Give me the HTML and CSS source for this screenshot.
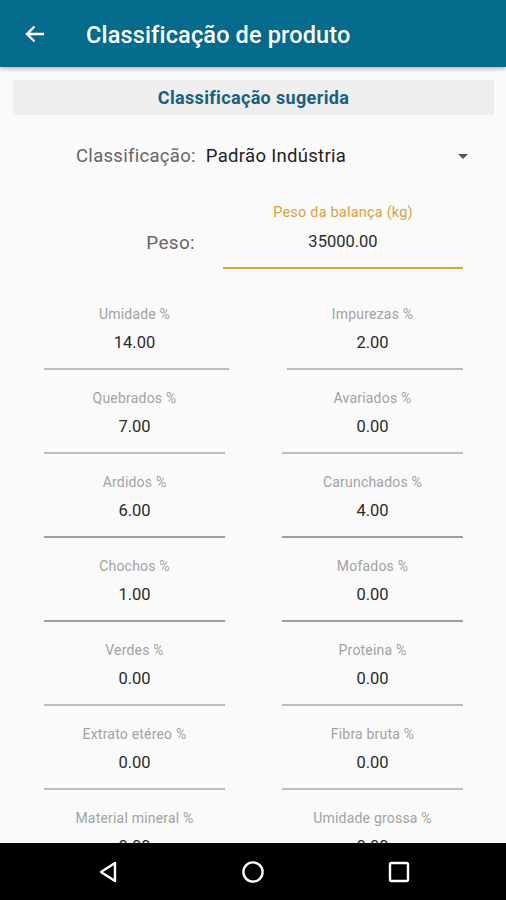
FILE: index.html
```html
<!DOCTYPE html>
<html lang="pt-BR">
<head>
  <meta charset="UTF-8">
  <title>Classificação de produto</title>
  <meta name="viewport" content="width=device-width,initial-scale=1">
  <link rel="stylesheet" href="styles.css">
</head>
<body>
  <div class="app">
    <header class="toolbar">
      <svg class="toolbar-back" width="20" height="18" viewBox="0 0 20 18">
        <path d="M19 9H2.5M9.5 1.5L2 9l7.5 7.5" fill="none" stroke="#fff" stroke-width="2.4"/>
      </svg>
      <h1 class="toolbar-title">Classificação de produto</h1>
    </header>

    <main class="content">
      <div class="section-bar">Classificação sugerida</div>

      <div class="class-row">
        <span class="class-label">Classificação:</span>
        <span class="class-value">Padrão Indústria</span>
        <span class="class-caret"></span>
      </div>

      <div class="peso-row">
        <span class="peso-label">Peso:</span>
        <div class="field field-active">
          <div class="field-label">Peso da balança (kg)</div>
          <div class="field-value">35000.00</div>
          <div class="field-line"></div>
        </div>
      </div>

      <div class="grid">
        <div class="field field-wide-l">
          <div class="field-label">Umidade %</div>
          <div class="field-value">14.00</div>
          <div class="field-line"></div>
        </div>
        <div class="field field-wide-r">
          <div class="field-label">Impurezas %</div>
          <div class="field-value">2.00</div>
          <div class="field-line"></div>
        </div>

        <div class="field">
          <div class="field-label">Quebrados %</div>
          <div class="field-value">7.00</div>
          <div class="field-line"></div>
        </div>
        <div class="field">
          <div class="field-label">Avariados %</div>
          <div class="field-value">0.00</div>
          <div class="field-line"></div>
        </div>

        <div class="field field-dark">
          <div class="field-label">Ardidos %</div>
          <div class="field-value">6.00</div>
          <div class="field-line"></div>
        </div>
        <div class="field field-dark">
          <div class="field-label">Carunchados %</div>
          <div class="field-value">4.00</div>
          <div class="field-line"></div>
        </div>

        <div class="field field-dark">
          <div class="field-label">Chochos %</div>
          <div class="field-value">1.00</div>
          <div class="field-line"></div>
        </div>
        <div class="field field-dark">
          <div class="field-label">Mofados %</div>
          <div class="field-value">0.00</div>
          <div class="field-line"></div>
        </div>

        <div class="field">
          <div class="field-label">Verdes %</div>
          <div class="field-value">0.00</div>
          <div class="field-line"></div>
        </div>
        <div class="field">
          <div class="field-label">Proteina %</div>
          <div class="field-value">0.00</div>
          <div class="field-line"></div>
        </div>

        <div class="field">
          <div class="field-label">Extrato etéreo %</div>
          <div class="field-value">0.00</div>
          <div class="field-line"></div>
        </div>
        <div class="field">
          <div class="field-label">Fibra bruta %</div>
          <div class="field-value">0.00</div>
          <div class="field-line"></div>
        </div>

        <div class="field">
          <div class="field-label">Material mineral %</div>
          <div class="field-value">0.00</div>
          <div class="field-line"></div>
        </div>
        <div class="field">
          <div class="field-label">Umidade grossa %</div>
          <div class="field-value">0.00</div>
          <div class="field-line"></div>
        </div>
      </div>
    </main>

    <nav class="navbar">
      <svg width="22" height="24" viewBox="0 0 22 24">
        <path d="M18 3L4 12l14 9z" fill="none" stroke="#fff" stroke-width="2.4" stroke-linejoin="round"/>
      </svg>
      <svg width="24" height="24" viewBox="0 0 24 24">
        <circle cx="12" cy="12" r="9.6" fill="none" stroke="#fff" stroke-width="2.4"/>
      </svg>
      <svg width="24" height="24" viewBox="0 0 24 24">
        <rect x="3" y="3" width="18" height="18" rx="1.5" fill="none" stroke="#fff" stroke-width="2.4"/>
      </svg>
    </nav>
  </div>
</body>
</html>
```

FILE: styles.css
```css
html, body {
  margin: 0;
  padding: 0;
}
body {
  background: #fafafa;
  font-family: Roboto, 'Liberation Sans', sans-serif;
  color: #333;
}
.app {
  height: 900px;
  display: flex;
  flex-direction: column;
  overflow: hidden;
}
.toolbar {
  height: 67px;
  flex: none;
  background: #046b8d;
  display: flex;
  align-items: center;
  padding-left: 25px;
  box-shadow: 0 2px 4px rgba(0,0,0,0.25);
  position: relative;
  z-index: 1;
}
.toolbar-back {
  display: block;
  margin-top: 1px;
}
.toolbar-title {
  margin: 2px 0 0 41px;
  color: #fff;
  font-size: 23.5px;
  font-weight: 500;
  letter-spacing: 0.15px;
}
.content {
  flex: 1;
  overflow: hidden;
}
.section-bar {
  margin: 13px 12px 0 13px;
  height: 35px;
  background: #eeeeee;
  display: flex;
  align-items: center;
  justify-content: center;
  color: #17607f;
  font-weight: bold;
  font-size: 18px;
  letter-spacing: 0.35px;
}
.class-row {
  display: flex;
  align-items: center;
  height: 30px;
  margin-top: 26px;
  padding: 0 38px 0 76px;
  font-size: 18.5px;
  letter-spacing: 0.3px;
}
.class-label {
  color: #666;
}
.class-value {
  margin-left: 10px;
  color: #222;
}
.class-caret {
  margin-left: auto;
  width: 0;
  height: 0;
  border-left: 5px solid transparent;
  border-right: 5px solid transparent;
  border-top: 5px solid #555;
}
.peso-row {
  display: grid;
  grid-template-columns: 1fr 240px;
  padding-right: 43px;
  margin-top: 29px;
}
.peso-label {
  align-self: center;
  text-align: right;
  padding-right: 28px;
  padding-top: 16px;
  font-size: 19px;
  letter-spacing: 0.3px;
  color: #666;
}
.grid {
  display: grid;
  grid-template-columns: 181px 181px;
  column-gap: 57px;
  padding: 0 43px 0 44px;
  margin-top: 32px;
}
.field {
  text-align: center;
  padding-top: 4px;
  height: 80px;
}
.field-label {
  font-size: 14px;
  line-height: 18px;
  letter-spacing: 0.2px;
  color: #a2a2a2;
}
.field-value {
  margin-top: 9px;
  font-size: 16.5px;
  line-height: 22px;
  color: #2b2b2b;
}
.field-line {
  margin-top: 14px;
  height: 2px;
  background: #bdbdbd;
}
.field-dark .field-line {
  background: #9e9e9e;
}
.field-wide-l .field-line {
  margin-right: -4px;
}
.field-wide-r .field-line {
  margin-left: 5px;
}
.peso-row .field {
  height: auto;
}
.field-active .field-label {
  font-size: 14.5px;
  color: #d9a240;
}
.field-active .field-line {
  background: #dea235;
}
.navbar {
  height: 57px;
  flex: none;
  background: #000;
  display: flex;
  align-items: center;
  gap: 122px;
  padding-left: 97px;
}
.navbar svg {
  display: block;
}
```
